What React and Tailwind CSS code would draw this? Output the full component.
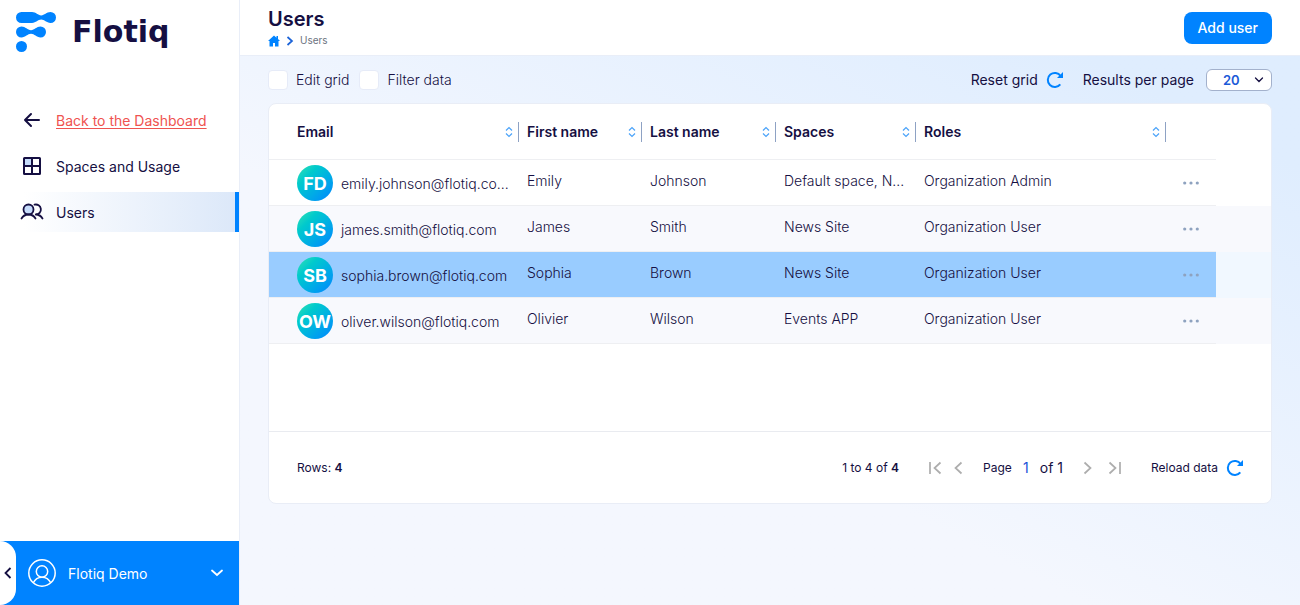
import React, { useState } from 'react';

const users = [
  { initials: 'FD', email: 'emily.johnson@flotiq.co...', first: 'Emily', last: 'Johnson', spaces: 'Default space, N...', role: 'Organization Admin' },
  { initials: 'JS', email: 'james.smith@flotiq.com', first: 'James', last: 'Smith', spaces: 'News Site', role: 'Organization User' },
  { initials: 'SB', email: 'sophia.brown@flotiq.com', first: 'Sophia', last: 'Brown', spaces: 'News Site', role: 'Organization User', hovered: true },
  { initials: 'OW', email: 'oliver.wilson@flotiq.com', first: 'Olivier', last: 'Wilson', spaces: 'Events APP', role: 'Organization User' },
];

function Logo() {
  return (
    <a href="#home" aria-label="Flotiq" className="flex items-center gap-4 px-4 pt-3">
      <svg width="40" height="40" viewBox="0 0 40 40" fill="#0083ff" aria-hidden="true">
        <path d="M5.5 0H16C20 0 22 3.4 25.2 3.4C28.4 3.4 30.5 0 34.5 0a5.5 5.5 0 0 1 0 11C30.5 11 28.4 7.6 25.2 7.6C22 7.6 20 11 16 11H5.5a5.5 5.5 0 0 1 0-11z" />
        <path d="M5.5 14.5C9.5 14.5 11.5 18.2 15 18.2C18.5 18.2 20.5 14.5 24.5 14.5a5.5 5.5 0 0 1 0 11C20.5 25.5 18.5 21.8 15 21.8C11.5 21.8 9.5 25.5 5.5 25.5a5.5 5.5 0 0 1 0-11z" />
        <circle cx="5.5" cy="34.5" r="5.5" />
      </svg>
      <span className="font-['DejaVu_Sans',sans-serif] text-[30px] font-bold leading-10">Flotiq</span>
    </a>
  );
}

function BackIcon() {
  return (
    <svg width="24" height="24" viewBox="0 0 24 24" fill="none" stroke="currentColor" strokeWidth="2" strokeLinecap="round" strokeLinejoin="round" aria-hidden="true">
      <path d="M19 12H5M11 6l-6 6 6 6" />
    </svg>
  );
}

function GridIcon() {
  return (
    <svg width="24" height="24" viewBox="0 0 24 24" fill="none" stroke="currentColor" strokeWidth="2" strokeLinejoin="round" aria-hidden="true">
      <path d="M4 4h8v8H4z" fill="#c6dcfb" stroke="none" />
      <rect x="4" y="4" width="16" height="16" rx="0.5" />
      <path d="M12 4v16M4 12h16" />
    </svg>
  );
}

function PeopleIcon() {
  return (
    <svg width="24" height="24" viewBox="0 0 24 24" fill="none" stroke="currentColor" strokeWidth="1.8" strokeLinecap="round" strokeLinejoin="round" aria-hidden="true">
      <circle cx="8.500" cy="9.500" r="5" fill="#c6dcfb" />
      <path d="M1.500 18.500c1.500-2.600 4-4 7-4s5.500 1.400 7 4" />
      <path d="M14.500 4.700a5 5 0 1 1 1.300 9.800c3 0 5.200 1.400 6.700 4" />
    </svg>
  );
}

function RefreshIcon() {
  return (
    <svg width="17" height="18" viewBox="0 0 17 18" fill="none" stroke="#0083ff" strokeWidth="2" aria-hidden="true">
      <path d="M14.300 13.300a7 7 0 1 1 .3-8.300" />
      <path d="M17 1v6h-6z" fill="#0083ff" stroke="none" />
    </svg>
  );
}

function SortIcon() {
  return (
    <svg width="8" height="12" viewBox="0 0 8 12" fill="none" stroke="#4ba3f9" strokeWidth="1.200" aria-hidden="true">
      <path d="M1 4.500l3-3 3 3M1 7.500l3 3 3-3" />
    </svg>
  );
}

function PagerButton({ label, path }) {
  return (
    <button type="button" aria-label={label} className="flex w-4 items-center justify-center text-[#adadad]">
      <svg width="16" height="16" viewBox="0 0 16 16" fill="none" stroke="currentColor" strokeWidth="1.700" aria-hidden="true">
        <path d={path} />
      </svg>
    </button>
  );
}

function NavItem({ icon, children, href, active, link }) {
  return (
    <a
      href={href}
      className={`flex h-10 items-center gap-3 pl-5 ${active ? 'border-r-4 border-[#0083ff] bg-linear-to-r from-white from-10% to-[#dce8f9]' : ''}`}
    >
      {icon}
      <span className={`pt-[2px] ${link ? 'text-[#ef5350] underline underline-offset-2' : ''}`}>{children}</span>
    </a>
  );
}

function Sidebar() {
  return (
    <aside className="flex w-60 shrink-0 flex-col border-r border-[#e9eef8] bg-white">
      <Logo />
      <nav className="mt-12 flex flex-col gap-[6px]" aria-label="Organization">
        <NavItem href="#dashboard" icon={<BackIcon />} link>Back to the Dashboard</NavItem>
        <NavItem href="#spaces" icon={<GridIcon />}>Spaces and Usage</NavItem>
        <NavItem href="#users" icon={<PeopleIcon />} active>Users</NavItem>
      </nav>
      <div className="mt-auto flex h-16 bg-[#0083ff] text-white">
        <button type="button" aria-label="Collapse sidebar" className="flex w-4 items-center justify-center rounded-r-2xl bg-white text-[#150f42]">
          <svg width="8" height="12" viewBox="0 0 8 12" fill="none" stroke="currentColor" strokeWidth="1.800" aria-hidden="true">
            <path d="M6.500 1L1.500 6l5 5" />
          </svg>
        </button>
        <button type="button" className="flex flex-1 items-center gap-3 pl-3 pr-4">
          <svg width="28" height="28" viewBox="0 0 28 28" fill="none" stroke="currentColor" strokeWidth="1.500" aria-hidden="true">
            <circle cx="14" cy="14" r="13.200" />
            <circle cx="14" cy="12.500" r="5.700" />
            <path d="M5.300 23.800c1.700-3.600 4.700-5.600 8.700-5.600s7 2 8.700 5.600" />
          </svg>
          <span className="pt-[2px]">Flotiq Demo</span>
          <svg className="ml-auto" width="12" height="8" viewBox="0 0 12 8" fill="none" stroke="currentColor" strokeWidth="1.800" strokeLinecap="round" aria-hidden="true">
            <path d="M1 1.500l5 4.500 5-4.500" />
          </svg>
        </button>
      </div>
    </aside>
  );
}

function Header() {
  return (
    <header className="flex h-14 items-center justify-between border-b border-[#e9eef8] bg-white px-7">
      <div className="pb-[2px]">
        <h1 className="text-xl font-semibold leading-7">Users</h1>
        <nav aria-label="Breadcrumb" className="flex h-4 items-center gap-[6px] text-[10px] text-[#6b7280]">
          <a href="#home" aria-label="Home">
            <svg width="12" height="12" viewBox="0 0 12 12" fill="#0083ff" aria-hidden="true">
              <path d="M6 .5L0 6h1.500v5.500H5V8h2v3.500h3.500V6H12l-2-1.900V1H8.500v1.700z" />
            </svg>
          </a>
          <svg width="8" height="10" viewBox="0 0 8 10" fill="none" stroke="#1b63d8" strokeWidth="1.700" aria-hidden="true">
            <path d="M1.500 1l4.500 4-4.500 4" />
          </svg>
          <span>Users</span>
        </nav>
      </div>
      <button type="button" className="h-8 rounded-lg bg-[#0083ff] px-[14px] font-medium text-white">Add user</button>
    </header>
  );
}

function Check({ id, label }) {
  return (
    <label htmlFor={id} className="flex items-center gap-2">
      <input id={id} type="checkbox" className="size-5 appearance-none rounded-[4px] border border-[#e6ebf8] bg-white checked:bg-[#0083ff]" />
      {label}
    </label>
  );
}

function Toolbar() {
  return (
    <div className="flex h-[22px] items-center">
      <div className="flex gap-[10px] font-light">
        <Check id="edit-grid" label="Edit grid" />
        <Check id="filter-data" label="Filter data" />
      </div>
      <button type="button" className="ml-auto flex items-center gap-2">
        Reset grid
        <RefreshIcon />
      </button>
      <label htmlFor="page-size" className="ml-5">Results per page</label>
      <span className="relative ml-3">
        <select id="page-size" defaultValue="20" className="block h-[22px] w-[66px] appearance-none rounded-md border border-[#a3b1cc] bg-white pl-4 text-[13px] font-semibold leading-5 text-[#1b5ad8]">
          <option>20</option>
          <option>50</option>
          <option>100</option>
        </select>
        <svg className="pointer-events-none absolute right-2 top-2" width="10" height="6" viewBox="0 0 10 6" fill="none" stroke="#150f42" strokeWidth="1.300" strokeLinecap="round" aria-hidden="true">
          <path d="M1.500 1L5 4.500 8.500 1" />
        </svg>
      </span>
    </div>
  );
}

function ColumnHead({ children, first }) {
  return (
    <th scope="col" className="p-0 text-left font-semibold">
      <div className={`flex h-5 items-center justify-between border-r border-[#8ea2c4] pr-[5px] ${first ? 'pl-7' : 'pl-2'}`}>
        {children}
        <button type="button" aria-label={`Sort by ${children}`}>
          <SortIcon />
        </button>
      </div>
    </th>
  );
}

function UsersTable() {
  const cell = 'truncate border-b border-[#eeeff2] px-2 pt-[11px] align-top leading-5';
  return (
    <table className="w-full table-fixed border-separate border-spacing-0">
      <colgroup>
        <col className="w-[250px]" />
        <col className="w-[123px]" />
        <col className="w-[134px]" />
        <col className="w-[140px]" />
        <col className="w-[250px]" />
        <col className="w-[50px]" />
        <col />
      </colgroup>
      <thead>
        <tr className="h-14 [&>th]:border-b [&>th]:border-[#eeeff2] [&>th:last-child]:border-0">
          <ColumnHead first>Email</ColumnHead>
          <ColumnHead>First name</ColumnHead>
          <ColumnHead>Last name</ColumnHead>
          <ColumnHead>Spaces</ColumnHead>
          <ColumnHead>Roles</ColumnHead>
          <th aria-label="Actions" />
          <th aria-hidden="true" />
        </tr>
      </thead>
      <tbody className="font-light">
        {users.map((u, i) => (
          <tr key={u.email} className={`h-[46px] ${u.hovered ? '[&>td]:bg-[#99ccff] [&>td]:bg-clip-padding [&>td:last-child]:bg-[#f1f8ff]' : i === 0 ? '' : 'bg-[#f8f9fd]'}`}>
            <td className="border-b border-[#eeeff2] py-0 pl-7 pr-2">
              <div className="flex items-center gap-2">
                <span className="flex size-9 shrink-0 items-center justify-center rounded-full bg-linear-to-br from-[#2be3b0] to-[#0083ff] pt-[2px] text-lg font-bold text-white">{u.initials}</span>
                <span className="whitespace-nowrap pt-[2px] leading-5">{u.email}</span>
              </div>
            </td>
            <td className={cell}>{u.first}</td>
            <td className={cell}>{u.last}</td>
            <td className={cell}>{u.spaces}</td>
            <td className={cell}>{u.role}</td>
            <td className="border-b border-[#eeeff2] p-0">
              <button type="button" aria-label={`Actions for ${u.first} ${u.last}`} className="mx-auto flex h-6 items-center">
                <svg width="16" height="4" viewBox="0 0 16 4" fill="#8ea2bf" aria-hidden="true">
                  <circle cx="1.700" cy="2" r="1.600" />
                  <circle cx="8" cy="2" r="1.600" />
                  <circle cx="14.300" cy="2" r="1.600" />
                </svg>
              </button>
            </td>
            <td />
          </tr>
        ))}
      </tbody>
    </table>
  );
}

function Footer() {
  const [page, setPage] = useState('1');
  return (
    <div className="flex h-[72px] items-center border-t border-[#e9ebf0] px-7 text-xs">
      <p>Rows: <b className="font-semibold">4</b></p>
      <p className="ml-auto">1 to 4 of <b className="font-semibold">4</b></p>
      <div className="ml-7 flex items-center gap-2">
        <PagerButton label="First page" path="M3 2v12M13.500 2.500L7.500 8l6 5.500" />
        <PagerButton label="Previous page" path="M10.500 2.500L4.500 8l6 5.500" />
      </div>
      <label htmlFor="page" className="ml-4">Page</label>
      <input id="page" value={page} onChange={(e) => setPage(e.target.value)} className="w-7 bg-transparent text-center text-sm text-[#1b4fd8]" />
      <span className="text-sm">of 1</span>
      <div className="ml-4 flex items-center gap-3">
        <PagerButton label="Next page" path="M5.500 2.500l6 5.500-6 5.500" />
        <PagerButton label="Last page" path="M2.500 2.500l6 5.500-6 5.500M13 2v12" />
      </div>
      <button type="button" className="ml-7 flex items-center gap-2">
        Reload data
        <RefreshIcon />
      </button>
    </div>
  );
}

export default function App() {
  return (
    <div className="flex min-h-screen bg-[#f3f6fe] font-['Inter',sans-serif] text-sm text-[#150f42]">
      <Sidebar />
      <div className="flex min-w-0 flex-1 flex-col">
        <Header />
        <main className="flex-1 bg-linear-to-tr from-[#f4f7fe] from-40% to-[#dfedfe] to-90% px-7 pt-[13px]">
          <Toolbar />
          <section aria-label="Users" className="mt-3 rounded-lg border border-[#e9edf6] bg-white">
            <div className="min-h-[327px]">
              <UsersTable />
            </div>
            <Footer />
          </section>
        </main>
      </div>
    </div>
  );
}
